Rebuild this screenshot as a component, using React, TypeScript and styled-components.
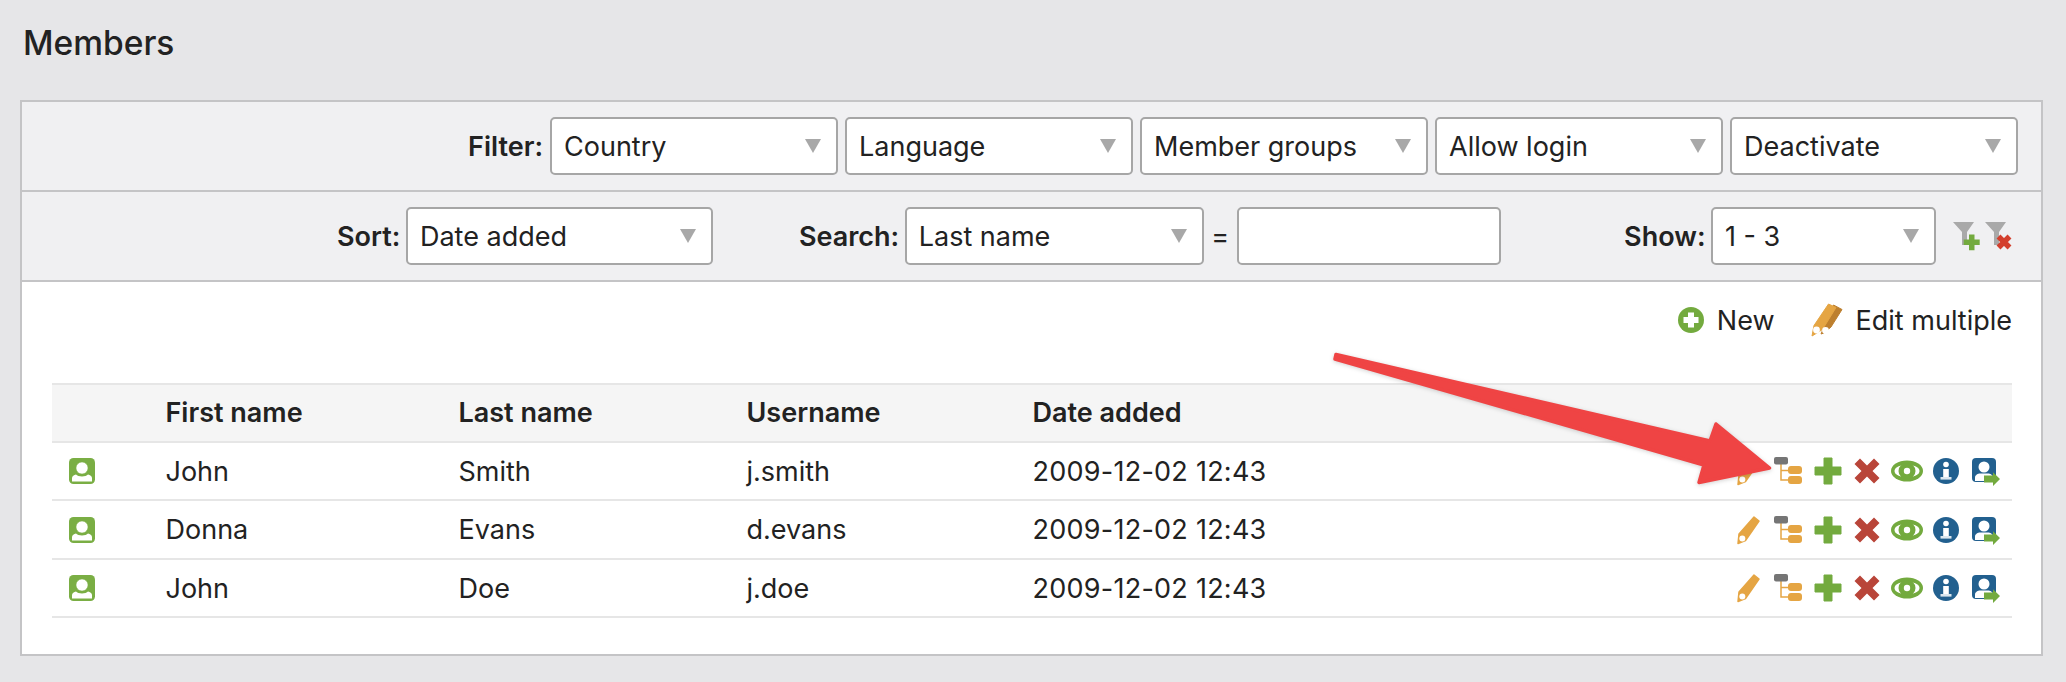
import React from "react";
import styled, { createGlobalStyle } from "styled-components";

const GlobalStyle = createGlobalStyle`
  html, body {
    margin: 0;
    padding: 0;
    background: #e6e6e8;
    font-family: Inter, "Liberation Sans", sans-serif;
    color: #222;
  }
`;

const Page = styled.div`
  position: relative;
  height: 682px;
  padding: 0 23px 0 20px;
  box-sizing: border-box;
  overflow: hidden;
`;

const Title = styled.h1`
  margin: 0;
  padding: 24px 0 0 3px;
  height: 100px;
  box-sizing: border-box;
  font-size: 33.5px;
  line-height: 38px;
  font-weight: 500;
  color: #222;
`;

const Panel = styled.section`
  border: 2px solid #c4c4c6;
  background: #fff;
  height: 556px;
  box-sizing: border-box;
`;

const Toolbar = styled.div`
  display: flex;
  justify-content: flex-end;
  align-items: center;
  height: 90px;
  box-sizing: border-box;
  padding-right: 23px;
  background: #f0f0f2;
  border-bottom: 2px solid #c4c4c6;
`;

const Group = styled.div<{ $offset?: number; $gap?: number }>`
  display: flex;
  align-items: center;
  gap: ${(p) => p.$gap ?? 7}px;
  margin-left: ${(p) => p.$offset ?? 0}px;
`;

const Label = styled.label`
  font-size: 27px;
  font-weight: 600;
  white-space: nowrap;
`;

const Select = styled.div<{ $width: number }>`
  position: relative;
  width: ${(p) => p.$width}px;
  height: 58px;
  box-sizing: border-box;
  border: 2px solid #a6a6a6;
  border-radius: 5px;
  background: #fff;
  padding-left: 12px;
  font-size: 27px;
  line-height: 56px;
  white-space: nowrap;

  &::after {
    content: "";
    position: absolute;
    right: 15px;
    top: 20px;
    border-left: 8.5px solid transparent;
    border-right: 8.5px solid transparent;
    border-top: 14px solid #a8a8a8;
  }
`;

const TextInput = styled.div`
  width: 264px;
  height: 58px;
  box-sizing: border-box;
  border: 2px solid #a6a6a6;
  border-radius: 5px;
  background: #fff;
`;

const Equals = styled.span`
  font-size: 27px;
  margin: 0 2.5px 0 2px;
`;

const FilterIcons = styled.div`
  display: flex;
  gap: 5px;
  margin-left: 11.5px;
  padding-right: 6px;
`;

const Content = styled.div`
  padding: 20px 29px 0 30px;
`;

const LinkBar = styled.div`
  display: flex;
  justify-content: flex-end;
  align-items: center;
  gap: 36px;
  height: 36px;
  margin-bottom: 45px;
`;

const LinkItem = styled.a`
  display: flex;
  align-items: center;
  gap: 13px;
  font-size: 27px;
  color: #222;
`;

const Row = styled.div<{ $head?: boolean }>`
  display: grid;
  grid-template-columns: 113.5px 293px 288px 286px 1fr;
  align-items: center;
  height: ${(p) => (p.$head ? 59.5 : 58.5)}px;
  padding-top: ${(p) => (p.$head ? 0 : 1)}px;
  box-sizing: border-box;
  border-bottom: 2px solid #e6e6e6;
  background: ${(p) => (p.$head ? "#f5f5f5" : "#fff")};
  border-top: ${(p) => (p.$head ? "2px solid #e6e6e6" : "none")};
  font-size: 27px;
  font-weight: ${(p) => (p.$head ? 600 : 400)};
`;

const StatusCell = styled.div`
  display: flex;
  padding-left: 17px;
`;

const DateCell = styled.div`
  display: flex;
  justify-content: space-between;
  align-items: center;
  letter-spacing: 0.25px;
`;

const Actions = styled.div`
  display: flex;
  padding-right: 6.5px;
`;

const ActionSlot = styled.span`
  display: flex;
  justify-content: center;
  width: 39.5px;
`;

const Arrow = styled.svg`
  position: absolute;
  left: 1320px;
  top: 340px;
  filter: drop-shadow(0 1px 2px rgba(0, 0, 0, 0.18));
`;

const GREEN = "#73aa3e";
const ORANGE = "#e5a543";
const RED = "#b94539";
const BLUE = "#22608f";

const PencilIcon = () => (
  <svg width="32" height="32" viewBox="0 0 32 32">
    <path d="M21 3 L26 7 L12.5 26.5 L5 29.5 L6 20 Z" fill={ORANGE} stroke={ORANGE} strokeWidth="1.5" strokeLinejoin="round" />
    <circle cx="9.3" cy="24.6" r="3" fill="#fff" />
  </svg>
);

const TreeIcon = () => (
  <svg width="32" height="32" viewBox="0 0 32 32">
    <path d="M9 9 V25 H16 M9 15.5 H16" fill="none" stroke={ORANGE} strokeWidth="1.5" />
    <rect x="2" y="2" width="14" height="7.5" rx="2" fill="#757575" />
    <rect x="16" y="11" width="14" height="8" rx="3" fill={ORANGE} />
    <rect x="16" y="21" width="14" height="8" rx="3" fill={ORANGE} />
  </svg>
);

const PlusIcon = () => (
  <svg width="32" height="32" viewBox="0 0 32 32">
    <path d="M12 3 H20 V12 H29 V20 H20 V29 H12 V20 H3 V12 H12 Z" fill={GREEN} stroke={GREEN} strokeWidth="1" strokeLinejoin="round" />
  </svg>
);

const CrossIcon = () => (
  <svg width="32" height="32" viewBox="0 0 32 32">
    <path d="M9 3.5 L16 10.5 L23 3.5 L28.5 9 L21.5 16 L28.5 23 L23 28.5 L16 21.5 L9 28.5 L3.5 23 L10.5 16 L3.5 9 Z" fill={RED} />
  </svg>
);

const EyeIcon = () => (
  <svg width="32" height="32" viewBox="0 0 32 32">
    <ellipse cx="16" cy="16" rx="16" ry="10.5" fill={GREEN} />
    <ellipse cx="16" cy="16" rx="12.5" ry="6.5" fill="#fff" />
    <ellipse cx="16" cy="16" rx="8.5" ry="8" fill={GREEN} />
    <circle cx="16" cy="16" r="3.2" fill="#fff" />
  </svg>
);

const InfoIcon = () => (
  <svg width="32" height="32" viewBox="0 0 32 32">
    <circle cx="16" cy="16" r="13" fill={BLUE} />
    <circle cx="16" cy="9.5" r="2.8" fill="#fff" />
    <rect x="13.2" y="14" width="5.6" height="8" fill="#fff" />
    <rect x="10.5" y="22" width="11" height="2.6" fill="#dbe6ee" />
  </svg>
);

const UserArrowIcon = () => (
  <svg width="32" height="32" viewBox="0 0 32 32">
    <rect x="2" y="3" width="24" height="24" rx="4" fill={BLUE} />
    <circle cx="14" cy="12" r="5.5" fill="#fff" />
    <path d="M5 26 V22.5 C5 20 8 18.5 10 18.5 H18 C20 18.5 23 20 23 22.5 V26 Z" fill="#fff" />
    <path d="M14 20.5 H23 V17.2 L30 24 L23 31 V27.5 H14 Z" fill={GREEN} />
  </svg>
);

const StatusIcon = () => (
  <svg width="26" height="26" viewBox="0 0 26 26">
    <rect width="26" height="26" rx="4.5" fill="#7aae44" />
    <circle cx="13" cy="10" r="6" fill="#fff" stroke="#7aae44" strokeWidth="0.5" />
    <path d="M3 23.5 V20 C3 18.5 5 16.8 7 16.5 C9 19 17 19 19 16.5 C21 16.8 23 18.5 23 20 V23.5 Z" fill="#fff" />
  </svg>
);

const CircledPlusIcon = () => (
  <svg width="26" height="26" viewBox="0 0 26 26">
    <circle cx="13" cy="13" r="13" fill={GREEN} />
    <path d="M10 5.5 H16 V10 H20.5 V16 H16 V20.5 H10 V16 H5.5 V10 H10 Z" fill="#fff" />
  </svg>
);

const PencilsIcon = () => (
  <svg width="32" height="34" viewBox="0 0 32 34">
    <path d="M22.5 2 L31 6.5 L20 24 L13 30 L10 31 Z" fill="#bd7f2e" stroke="#bd7f2e" strokeLinejoin="round" />
    <path d="M17.5 1 L25 4.5 L11.5 26.5 L1 33 L3 22.5 Z" fill={ORANGE} stroke={ORANGE} strokeLinejoin="round" />
    <circle cx="5.5" cy="27" r="3.4" fill="#fff" />
    <circle cx="14.5" cy="27.5" r="3.4" fill="#fff" />
  </svg>
);

const FunnelIcon = ({ remove }: { remove?: boolean }) => (
  <svg width="27" height="30" viewBox="0 0 27 30">
    <path d="M0 1 H21 L14 11 V24 H9 V11 Z" fill="#a9a9a9" />
    {remove ? (
      <path d="M13.5 15.5 L24.5 26.5 M24.5 15.5 L13.5 26.5" fill="none" stroke="#d33f2d" strokeWidth="5.5" />
    ) : (
      <path d="M16 13.5 H21.5 V18.5 H26.7 V24 H21.5 V29.3 H16 V24 H10.7 V18.5 H16 Z" fill={GREEN} />
    )}
  </svg>
);

const ACTIONS = [PencilIcon, TreeIcon, PlusIcon, CrossIcon, EyeIcon, InfoIcon, UserArrowIcon];

const MEMBERS = [
  { first: "John", last: "Smith", user: "j.smith", date: "2009-12-02 12:43" },
  { first: "Donna", last: "Evans", user: "d.evans", date: "2009-12-02 12:43" },
  { first: "John", last: "Doe", user: "j.doe", date: "2009-12-02 12:43" },
];

const App: React.FC = () => (
  <Page>
    <GlobalStyle />
    <Title>Members</Title>
    <Panel>
      <Toolbar>
        <Group>
          <Label>Filter:</Label>
          {["Country", "Language", "Member groups", "Allow login", "Deactivate"].map((name) => (
            <Select key={name} $width={288}>{name}</Select>
          ))}
        </Group>
      </Toolbar>
      <Toolbar>
        <Group $gap={5.5}>
          <Label>Sort:</Label>
          <Select $width={307}>Date added</Select>
        </Group>
        <Group $offset={86} $gap={5.5}>
          <Label>Search:</Label>
          <Select $width={299}>Last name</Select>
          <Equals>=</Equals>
          <TextInput />
        </Group>
        <Group $offset={123} $gap={5.5}>
          <Label>Show:</Label>
          <Select $width={225}>1 - 3</Select>
          <FilterIcons>
            <FunnelIcon />
            <FunnelIcon remove />
          </FilterIcons>
        </Group>
      </Toolbar>
      <Content>
        <LinkBar>
          <LinkItem><CircledPlusIcon />New</LinkItem>
          <LinkItem><PencilsIcon />Edit multiple</LinkItem>
        </LinkBar>
        <Row $head>
          <span />
          <span>First name</span>
          <span>Last name</span>
          <span>Username</span>
          <span>Date added</span>
        </Row>
        {MEMBERS.map((m) => (
          <Row key={m.user}>
            <StatusCell><StatusIcon /></StatusCell>
            <span>{m.first}</span>
            <span>{m.last}</span>
            <span>{m.user}</span>
            <DateCell>
              <span>{m.date}</span>
              <Actions>
                {ACTIONS.map((Icon, i) => (
                  <ActionSlot key={i}><Icon /></ActionSlot>
                ))}
              </Actions>
            </DateCell>
          </Row>
        ))}
      </Content>
    </Panel>
    <Arrow width="470" height="160" viewBox="0 0 470 160">
      <path
        d="M16 14.5 L390 101 L396 84 L449.5 128 L379 142.5 L384 125 L15 19 Z"
        fill="#ef4444"
        stroke="#ef4444"
        strokeWidth="3.5"
        strokeLinejoin="round"
      />
    </Arrow>
  </Page>
);

export default App;
